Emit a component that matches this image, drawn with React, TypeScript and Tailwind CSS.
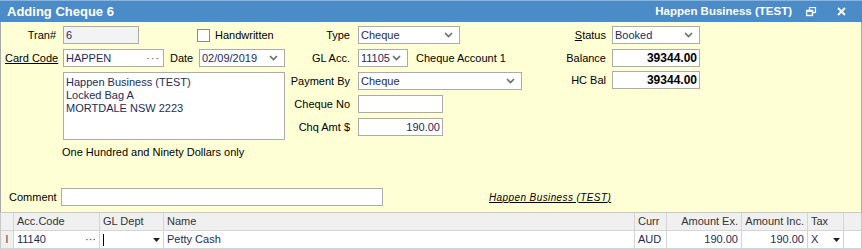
import React from 'react';

const font = { fontFamily: '"Liberation Sans", Arial, sans-serif' };

const Chevron: React.FC = () => (
    <svg width="9" height="6" viewBox="0 0 9 6" className="shrink-0"><path d="M1 1 L4.5 4.5 L8 1" fill="none" stroke="#6b6b6b" strokeWidth="1.6" /></svg>
);

const Box: React.FC<{ w: string; children?: React.ReactNode; className?: string; bg?: string }> = ({ w, children, className, bg }) => (
    <div className={`${w} h-[18px] border border-[#ababab] ${bg || 'bg-white'} flex items-center px-[2px] text-[#1e2a5a] ${className || ''}`}>{children}</div>
);

const Select: React.FC<{ w: string; value: string }> = ({ w, value }) => (
    <Box w={w} className="justify-between pr-[6px]"><span>{value}</span><Chevron /></Box>
);

const Row: React.FC<{ children: React.ReactNode; className?: string }> = ({ children, className }) => (
    <div className={`flex items-center h-[18px] ${className || ''}`}>{children}</div>
);

const cols = [
    { w: 'w-[13px]', label: '' },
    { w: 'w-[86px]', label: 'Acc.Code' },
    { w: 'w-[64px]', label: 'GL Dept' },
    { w: 'w-[471px]', label: 'Name' },
    { w: 'w-[32px]', label: 'Curr' },
    { w: 'w-[75px]', label: 'Amount Ex.', right: true },
    { w: 'w-[66px]', label: 'Amount Inc.', right: true },
    { w: 'w-[36px]', label: 'Tax' },
];

export default function App() {
    return (
        <div className="w-[862px] h-[249px] overflow-hidden bg-white text-[11px] text-black" style={font}>
            <div className="h-[22px] bg-[#4a8bc8] border-t border-[#8fb2d9] flex items-center justify-between text-white font-bold">
                <span className="pl-[7px] text-[13px]">Adding Cheque 6</span>
                <div className="flex items-center">
                    <span className="text-[11.5px]">Happen Business (TEST)</span>
                    <svg width="11" height="10" viewBox="0 0 11 10" className="ml-[14px]"><rect x="3.5" y="0.5" width="6" height="5" fill="none" stroke="white" strokeWidth="1.2" /><rect x="0.5" y="3.5" width="6" height="5" fill="#4a8bc8" stroke="white" strokeWidth="1.4" /><line x1="1" y1="4" x2="6" y2="4" stroke="white" strokeWidth="1.6" /></svg>
                    <svg width="9" height="9" viewBox="0 0 9 9" className="ml-[20px] mr-[16px]"><path d="M1 1 L8 8 M8 1 L1 8" stroke="white" strokeWidth="1.8" /></svg>
                </div>
            </div>
            <div className="h-[190px] bg-[#ffffd6] border-l border-r border-[#a8a8a8] flex flex-col">
                <div className="flex pt-[4px]">
                    <div className="w-[284px] flex flex-col">
                        <Row>
                            <span className="w-[62px] text-right pr-[7px]">Tran#</span>
                            <Box w="w-[76px]" bg="bg-[#f3f3f3]">6</Box>
                            <div className="ml-[58px] w-[13px] h-[13px] border border-[#8a8a8a] bg-white" />
                            <span className="ml-[5px]">Handwritten</span>
                        </Row>
                        <Row className="mt-[5px]">
                            <span className="w-[62px] pl-[4px] underline">Card Code</span>
                            <Box w="w-[101px]" className="justify-between pr-[3px]"><span>HAPPEN</span><span className="text-[#555] tracking-[1px]">···</span></Box>
                            <span className="w-[35px] pl-[6px]">Date</span>
                            <Select w="w-[86px]" value="02/09/2019" />
                        </Row>
                        <div className="mt-[5px] ml-[62px] w-[222px] h-[68px] border border-[#ababab] bg-white px-[2px] pt-[3px] leading-[13px] text-[#1e2a5a]">
                            <div>Happen Business (TEST)</div>
                            <div>Locked Bag A</div>
                            <div>MORTDALE NSW 2223</div>
                        </div>
                        <div className="ml-[61px] mt-[4px]">One Hundred and Ninety Dollars only</div>
                    </div>
                    <div className="w-[276px] flex flex-col gap-[5px]">
                        <Row><span className="w-[73px] text-right pr-[8px]">Type</span><Select w="w-[102px]" value="Cheque" /></Row>
                        <Row><span className="w-[73px] text-right pr-[8px]">GL Acc.</span><Select w="w-[50px]" value="11105" /><span className="ml-[8px]">Cheque Account 1</span></Row>
                        <Row><span className="w-[73px] text-right pr-[8px]">Payment By</span><Select w="w-[164px]" value="Cheque" /></Row>
                        <Row><span className="w-[73px] text-right pr-[8px]">Cheque No</span><Box w="w-[85px]" /></Row>
                        <Row><span className="w-[73px] text-right pr-[8px]">Chq Amt $</span><Box w="w-[85px]" className="justify-end">190.00</Box></Row>
                    </div>
                    <div className="flex flex-col gap-[5px]">
                        <Row><span className="w-[51px] text-right pr-[6px]"><span className="underline">S</span>tatus</span><Select w="w-[88px]" value="Booked" /></Row>
                        <Row><span className="w-[51px] text-right pr-[6px]">Balance</span><Box w="w-[88px]" className="justify-end font-bold text-black text-[12px]">39344.00</Box></Row>
                        <Row className="-mt-[1px]"><span className="w-[51px] text-right pr-[6px]">HC Bal</span><Box w="w-[88px]" className="justify-end font-bold text-black text-[12px]">39344.00</Box></Row>
                    </div>
                </div>
                <Row className="mt-auto mb-[6px]">
                    <span className="w-[60px] pl-[8px]">Comment</span>
                    <Box w="w-[322px]" />
                    <span className="ml-[106px] italic underline text-[10px] tracking-[0.4px]">Happen Business (TEST)</span>
                </Row>
            </div>
            <div className="border-t border-[#a0a0a0] border-l border-r border-[#c8c8c8]">
                <div className="flex h-[18px] bg-[#f0f0f0] border-b border-[#d4d4d4] text-[#333]">
                    {cols.map((c, i) => (
                        <div key={i} className={`${c.w} border-r border-[#d4d4d4] flex items-center px-[3px] ${c.right ? 'justify-end' : ''}`}>{c.label}</div>
                    ))}
                </div>
                <div className="flex h-[18px] bg-white text-[#1e2a5a] border-b border-[#d4d4d4]">
                    <div className="w-[13px] border-r border-[#d4d4d4] bg-[#f0f0f0] flex items-center justify-center text-[#333] text-[10px]">I</div>
                    <div className="w-[86px] border-r border-[#d4d4d4] flex items-center justify-between px-[3px]"><span>11140</span><span className="text-[#333]">···</span></div>
                    <div className="w-[64px] border-r border-[#d4d4d4] flex items-center justify-between px-[3px]"><span className="w-[1px] h-[12px] bg-black" /><svg width="7" height="4" viewBox="0 0 7 4"><path d="M0 0 H7 L3.5 4 Z" fill="#222" /></svg></div>
                    <div className="w-[471px] border-r border-[#d4d4d4] flex items-center px-[3px]">Petty Cash</div>
                    <div className="w-[32px] border-r border-[#d4d4d4] flex items-center px-[3px]">AUD</div>
                    <div className="w-[75px] border-r border-[#d4d4d4] flex items-center justify-end px-[3px]">190.00</div>
                    <div className="w-[66px] border-r border-[#d4d4d4] flex items-center justify-end px-[3px]">190.00</div>
                    <div className="w-[36px] border-r border-[#d4d4d4] flex items-center justify-between px-[3px]"><span>X</span><svg width="7" height="4" viewBox="0 0 7 4"><path d="M0 0 H7 L3.5 4 Z" fill="#222" /></svg></div>
                </div>
            </div>
        </div>
    );
}
